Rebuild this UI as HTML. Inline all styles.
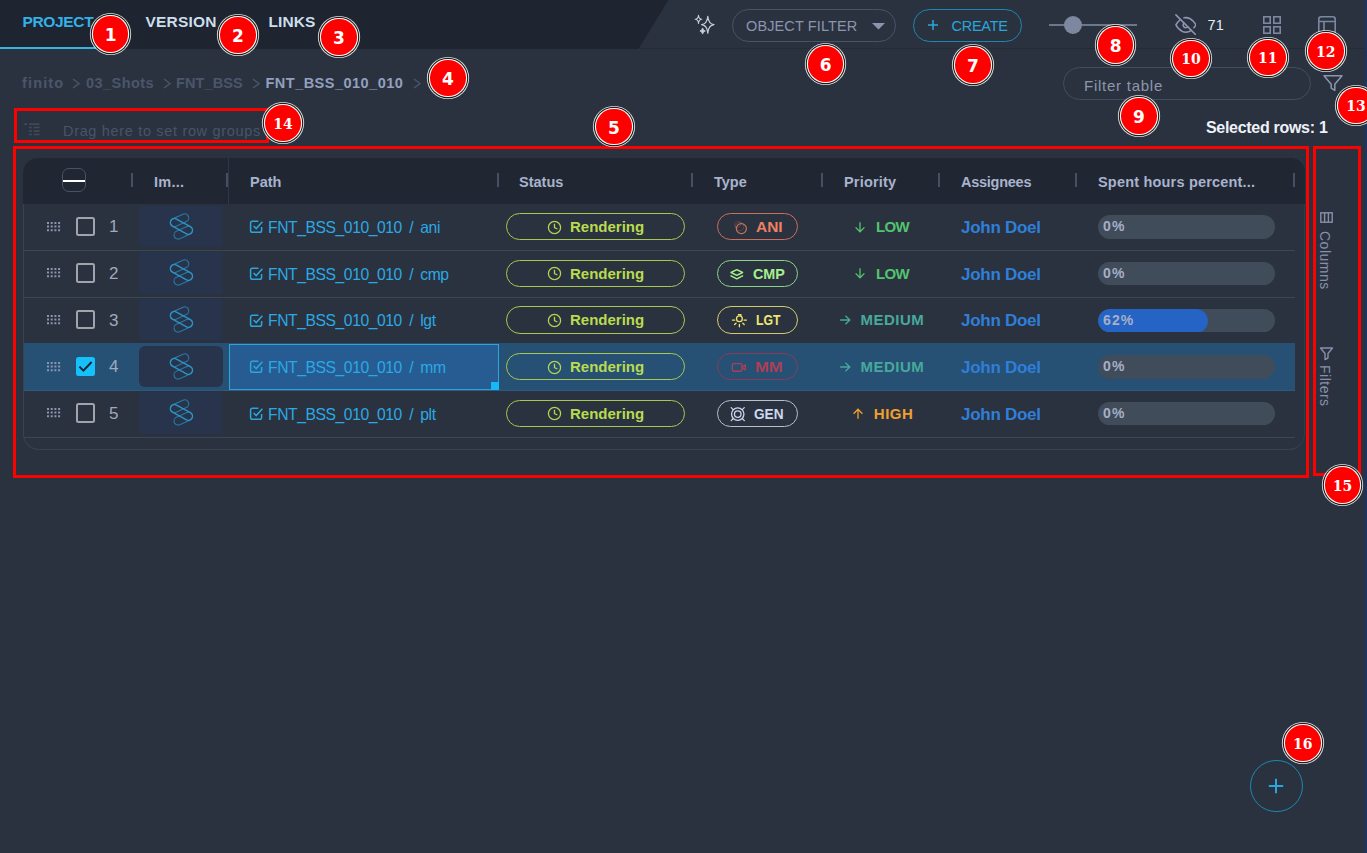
<!DOCTYPE html>
<html lang="en">
<head>
<meta charset="utf-8">
<title>Project tasks</title>
<style>
*{box-sizing:border-box;margin:0;padding:0}
html,body{width:1367px;height:853px;overflow:hidden}
body{background:#2a3240;font-family:"Liberation Sans",sans-serif;color:#d0d6e2;position:relative}
.abs{position:absolute}
#topdark{left:0;top:0;width:680px;height:49px;background:#1e2430;clip-path:polygon(0 0,668.5px 0,638.5px 49px,0 49px)}
#topline{left:640px;top:48px;width:727px;height:1px;background:#252c39}
.tab{top:12.5px;font-size:15.5px;font-weight:bold;color:#cddeec;white-space:nowrap}
#tabline{left:0;top:47px;width:113px;height:2px;background:#38b4e4}
.crumb{top:74.5px;font-size:14.5px;font-weight:bold;color:#4b566a;white-space:nowrap}
.chev{fill:none;stroke:#4b566a;stroke-width:1.4}
.pill{border-radius:17px;border:1px solid #4a5365;height:33px}
.badge{width:0;height:0;z-index:50}
.badge u{position:absolute;left:-17.8px;top:-17.8px;width:35.6px;height:35.6px;border-radius:50%;background:#f00;box-shadow:0 0 0 1.1px #fff,0 0 0 2.2px #1c1c1c,0 0 0 3.1px rgba(255,255,255,.85)}
.badge span{position:absolute;left:-20px;top:-20px;width:40px;height:40px;text-align:center;color:#fff;font:bold 17px/43px "DejaVu Sans",sans-serif}
.badge.s span{font:bold 14px/43px "DejaVu Serif",serif}
.redbox{border:3.2px solid #f00;z-index:40}

#thead{left:23.3px;top:157.7px;width:1281.5px;height:46.3px;background:#202733;border-radius:15px 14px 0 0}
#tframe{left:23.3px;top:204px;width:1281.5px;height:245.8px;border:1px solid #394253;border-top:none;border-radius:0 0 16px 16px;border-right-color:#323b4a}
.hd{top:173.5px;font-size:14.5px;font-weight:bold;color:#a9b3cd;white-space:nowrap}
.sep{top:173px;width:2px;height:14px;background:#475062}
.row{left:24px;width:1271px;height:46.67px}
.row::after{content:"";position:absolute;left:0;right:0;top:46.1px;height:1px;background:#3b4656}
.row.sel::before{content:"";position:absolute;left:0;right:0;top:-.7px;height:47.8px;background:#265074}
.row.sel::after{background:#2f5a7e}
.drag{left:22.8px;top:18px}
.cb{left:52.4px;top:13px;width:19px;height:19.2px;border:2px solid #a1a4aa;border-radius:2.5px}
.cb.on{background:#15c0fb;border:none}
.cb.on svg{position:absolute;left:0;top:0}
.num{left:85px;top:13.7px;font-size:17px;color:#a0a9be}
.thumb{left:115px;top:1.8px;width:84px;height:41.5px;background:#27344b;border-radius:3px}
.row.sel .thumb{top:2.6px;height:40.2px;border-radius:6px;background:#27344c}
.logo{left:143px;top:8px}
.tick{left:225.2px;top:15.6px}
.path{left:244px;top:14.2px;font-size:16.5px;letter-spacing:-.45px;word-spacing:3.5px;transform:scaleX(.95);transform-origin:0 0;color:#2ba9e4;white-space:nowrap}
.focus{left:204.7px;top:0;width:270.8px;height:46px;border:1px solid #2ba6dc;background:#265c92}
.handle{left:467.3px;top:38.2px;width:7.6px;height:7.6px;background:#16b8f8}
.st{left:482.1px;top:9.2px;width:179.3px;height:27.2px;border:1.4px solid #a8c84e;border-radius:14px}
.clock{left:523.2px;top:15.9px}
.stt{left:546px;top:14.2px;font-size:15px;font-weight:bold;color:#b8dc4e;white-space:nowrap}
.ty{left:693.2px;top:9.2px;width:81.1px;height:27.2px;border:1.5px solid;border-radius:14px}
.tyi{left:705px;top:14.2px}
.tyt{transform-origin:0 0;top:14.2px;font-size:15px;font-weight:bold;white-space:nowrap}
.arr.down{left:830.1px;top:17px}
.arr.up{left:827.5px;top:17.2px}
.arr.right{left:815.1px;top:17.3px}
.pri{top:14.2px;font-size:15px;font-weight:bold;white-space:nowrap}
.plow{left:852px;letter-spacing:-.7px}.pmedium{left:836.6px;letter-spacing:.45px}.phigh{left:849.8px;letter-spacing:.5px}
.who{left:937px;top:14.3px;font-size:17px;font-weight:bold;letter-spacing:-.27px;color:#2f7fd8;white-space:nowrap}
.bar{left:1074.1px;top:11.4px;width:176.5px;height:23.4px;border-radius:12px;background:#414c5a;overflow:hidden}
.bar i{position:absolute;left:0;top:0;width:110.2px;height:24px;background:#2563c4;border-radius:12px}
.bar span{position:absolute;left:5px;top:3px;font-size:14px;font-weight:bold;color:#a5afc6;letter-spacing:1.1px}
.side{font-size:14px;color:#8790a8;transform:rotate(90deg);transform-origin:0 0;white-space:nowrap;letter-spacing:.5px}
#fab{left:1250px;top:759.7px;width:52.6px;height:52.6px;border-radius:50%;border:1.8px solid #1f86b1}
</style>
</head>
<body>
<!-- top bar -->
<div class="abs" id="topdark"></div>
<div class="abs" id="topline"></div>
<div class="abs tab" style="left:22.5px;color:#33b1e8;letter-spacing:-.35px">PROJECT</div>
<div class="abs tab" style="left:145.5px;letter-spacing:.2px">VERSION</div>
<div class="abs tab" style="left:268.5px;letter-spacing:.1px">LINKS</div>
<div class="abs" id="tabline"></div>

<!-- breadcrumb -->
<div class="abs crumb" style="left:22px;letter-spacing:1.15px">finito</div>
<svg class="abs chev" style="left:72px;top:78px" width="8" height="11" viewBox="0 0 8 11"><path d="M1 1 L7 5.5 L1 10"/></svg>
<div class="abs crumb" style="left:86px;letter-spacing:.45px">03_Shots</div>
<svg class="abs chev" style="left:162.5px;top:78px" width="8" height="11" viewBox="0 0 8 11"><path d="M1 1 L7 5.5 L1 10"/></svg>
<div class="abs crumb" style="left:176px;letter-spacing:.1px">FNT_BSS</div>
<svg class="abs chev" style="left:252px;top:78px" width="8" height="11" viewBox="0 0 8 11"><path d="M1 1 L7 5.5 L1 10"/></svg>
<div class="abs crumb" style="left:265.5px;color:#93a0bd;letter-spacing:.48px">FNT_BSS_010_010</div>
<svg class="abs chev" style="left:412.5px;top:78px" width="8" height="11" viewBox="0 0 8 11"><path d="M1 1 L7 5.5 L1 10"/></svg>

<!-- toolbar -->
<svg class="abs" style="left:694px;top:14px" width="22" height="22" viewBox="0 0 22 22" fill="none" stroke="#c5cedc" stroke-width="1.2" stroke-linejoin="round"><path d="M13.8 2.299999999999999 Q14.5 10.0 20.0 10.7 Q14.5 11.399999999999999 13.8 19.1 Q13.100000000000001 11.399999999999999 7.6000000000000005 10.7 Q13.100000000000001 10.0 13.8 2.299999999999999 Z"/><path d="M4.5 1.2000000000000002 Q4.8 5.0 7.8 5.3 Q4.8 5.6 4.5 9.399999999999999 Q4.2 5.6 1.2000000000000002 5.3 Q4.2 5.0 4.5 1.2000000000000002 Z" stroke-width="1.1"/><path d="M8.6 13.9 Q9.1 16.5 11.3 17 Q9.1 17.5 8.6 20.1 Q8.1 17.5 5.8999999999999995 17 Q8.1 16.5 8.6 13.9 Z" stroke-width=".8" fill="#c5cedc"/></svg>
<div class="abs pill" style="left:732.3px;top:8.7px;width:164px;height:33.2px;border-width:1.4px"></div>
<div class="abs" style="left:746px;top:17.5px;font-size:14.5px;color:#8b95ae;white-space:nowrap;letter-spacing:.12px">OBJECT FILTER</div>
<svg class="abs" style="left:872px;top:23px" width="13" height="7" viewBox="0 0 13 7"><path d="M0 0 H13 L6.5 6.6 Z" fill="#8b95ae"/></svg>
<div class="abs pill" style="left:913px;top:9px;width:109px;border-color:#1f86b1;border-width:1.5px"></div>
<div class="abs" style="left:951.5px;top:17.5px;font-size:14.5px;color:#2ba6dc;white-space:nowrap;letter-spacing:-.25px">CREATE</div>
<svg class="abs" style="left:927px;top:19px" width="12" height="12" viewBox="0 0 12 12" stroke="#2ba6dc" stroke-width="1.5"><path d="M6 1 V11 M1 6 H11"/></svg>
<div class="abs" style="left:1049px;top:24px;width:88px;height:2px;background:#6c768d"></div>
<div class="abs" style="left:1064px;top:16px;width:18px;height:18px;border-radius:50%;background:#7d87a0"></div>
<svg class="abs" style="left:1174.7px;top:13.7px" width="21.8" height="21.8" viewBox="0 0 24 24" fill="none" stroke="#8d97b1" stroke-width="1.7" stroke-linecap="round" stroke-linejoin="round"><path d="M17.94 17.94A10.07 10.07 0 0 1 12 20c-7 0-11-8-11-8a18.45 18.45 0 0 1 5.06-5.94M9.9 4.24A9.12 9.12 0 0 1 12 4c7 0 11 8 11 8a18.5 18.5 0 0 1-2.16 3.19m-6.72-1.07a3 3 0 1 1-4.24-4.24"/><path d="M1 1 L23 23"/></svg>
<div class="abs" style="left:1207.5px;top:16.5px;font-size:14.5px;color:#e6ecf4;letter-spacing:.2px">71</div>
<svg class="abs" style="left:1262px;top:15px" width="20" height="20" viewBox="0 0 20 20" fill="none" stroke="#7d87a0" stroke-width="1.6">
<rect x="1.8" y="1.8" width="6.4" height="6.4"/><rect x="11.8" y="1.8" width="6.4" height="6.4"/><rect x="1.8" y="11.8" width="6.4" height="6.4"/><rect x="11.8" y="11.8" width="6.4" height="6.4"/>
</svg>
<svg class="abs" style="left:1317px;top:15px" width="20" height="20" viewBox="0 0 20 20" fill="none" stroke="#7d87a0" stroke-width="1.6">
<rect x="1.8" y="1.8" width="16.4" height="16.4" rx="2.5"/><path d="M1.8 6.5 H18.2 M7 6.5 V18.2"/>
</svg>
<!-- filter input -->
<div class="abs pill" style="left:1063px;top:67px;width:248px;height:33px;border-color:#434d5f;border-width:1.2px"></div>
<div class="abs" style="left:1084px;top:77px;font-size:15px;color:#8e97aa;white-space:nowrap;letter-spacing:.75px">Filter table</div>
<svg class="abs" style="left:1322px;top:73px" width="22" height="22" viewBox="0 0 22 22" fill="none" stroke="#8b95ae" stroke-width="1.5" stroke-linejoin="round"><path d="M2 2.8 H20 L12.8 11.2 V17.4 L9.2 15.2 V11.2 Z"/></svg>
<div class="abs" style="left:1206px;top:118.5px;font-size:16px;font-weight:bold;color:#eef2f8;white-space:nowrap;letter-spacing:-.3px">Selected rows: 1</div>
<!-- row group bar -->
<svg class="abs" style="left:24px;top:122px" width="18" height="15" viewBox="0 0 18 15" fill="#3f4b5e"><rect x=".1" y="1.3" width="3" height="1.6"/><rect x="5" y="1.3" width="10.6" height="1.6"/><rect x="5" y="4.7" width="2.8" height="1.6"/><rect x="9.8" y="4.7" width="5.8" height="1.6"/><rect x="5" y="8.2" width="2.8" height="1.6"/><rect x="9.8" y="8.2" width="5.8" height="1.6"/><rect x="5" y="11.7" width="2.8" height="1.5"/><rect x="9.8" y="11.7" width="5.8" height="1.5"/></svg>
<div class="abs" style="left:63px;top:123px;font-size:14.5px;color:#485469;white-space:nowrap;letter-spacing:.67px">Drag here to set row groups</div>


<!-- table -->
<div class="abs" id="thead"></div>
<div class="abs" id="tframe"></div>
<div class="abs" style="left:62.3px;top:168px;width:23.7px;height:24px;border:1px solid #4a5365;border-radius:7px"></div>
<div class="abs" style="left:63px;top:179.7px;width:22px;height:2px;background:#fff"></div>
<div class="abs sep" style="left:131px"></div>
<div class="abs hd" style="left:154px;letter-spacing:.25px">Im...</div>
<div class="abs sep" style="left:226px"></div>
<div class="abs" style="left:228px;top:158px;width:1px;height:46px;background:#2f3746"></div>
<div class="abs hd" style="left:250px">Path</div>
<div class="abs sep" style="left:497px"></div>
<div class="abs hd" style="left:519px">Status</div>
<div class="abs sep" style="left:691px"></div>
<div class="abs hd" style="left:714px">Type</div>
<div class="abs sep" style="left:821px"></div>
<div class="abs hd" style="left:844px;letter-spacing:.18px">Priority</div>
<div class="abs sep" style="left:938px"></div>
<div class="abs hd" style="left:961px;letter-spacing:-.26px">Assignees</div>
<div class="abs sep" style="left:1075px"></div>
<div class="abs hd" style="left:1098px;letter-spacing:.19px">Spent hours percent...</div>
<div class="abs sep" style="left:1293px"></div>
<!-- rows -->
<div class="abs row" style="top:203.80px">
<svg class="abs drag" width="14" height="10" viewBox="0 0 14 10" fill="#8a94ad"><path d="M0 0h2v2H0zM3.7 0h2v2h-2zM7.4 0h2v2h-2zM11.1 0h2v2h-2zM0 3.6h2v2H0zM3.7 3.6h2v2h-2zM7.4 3.6h2v2h-2zM11.1 3.6h2v2h-2zM0 7.2h2v2H0zM3.7 7.2h2v2h-2zM7.4 7.2h2v2h-2zM11.1 7.2h2v2h-2z"/></svg>
<div class="abs cb"></div>
<div class="abs num">1</div>
<div class="abs thumb"></div><svg class="abs logo" width="28" height="30" viewBox="0 0 28 30" fill="none"><g transform="translate(14.45 14.4) scale(.94) translate(-14.45 -14.6)"><g stroke="#2a789f" stroke-width="1.25"><rect x="-10.30" y="-4.30" width="20.59" height="8.60" rx="4.30" transform="translate(12.45 8.00) rotate(-24.6)"/><rect x="-10.37" y="-4.30" width="20.75" height="8.60" rx="4.30" transform="translate(16.38 21.23) rotate(-24.6)"/></g><rect x="-12.80" y="-4.30" width="25.61" height="8.60" rx="4.30" transform="translate(14.45 14.60) rotate(28.8)" stroke="#2c93c5" stroke-width="1.5"/></g></svg>
<svg class="abs tick" width="15" height="15" viewBox="0 0 15 15" fill="none" stroke="#2ba6dc" stroke-width="1.5"><path d="M12.6 8 V11.4 a1.8 1.8 0 0 1 -1.8 1.8 H3.4 A1.8 1.8 0 0 1 1.6 11.4 V4 A1.8 1.8 0 0 1 3.4 2.2 H9.4"/><path d="M4.6 7 L7.2 9.6 L13.4 2.8"/></svg>
<div class="abs path">FNT_BSS_010_010 / ani</div>
<div class="abs st"></div><svg class="abs clock" width="15" height="15" viewBox="0 0 15 15" fill="none" stroke="#b2d54e" stroke-width="1.3"><circle cx="7.5" cy="7.5" r="6.1"/><path d="M7.5 3.8 V7.7 L10.4 9"/></svg><div class="abs stt">Rendering</div>
<div class="abs ty" style="border-color:#cc6f59"></div><svg class="abs tyi" width="20" height="20" viewBox="0 0 20 20" fill="none" stroke="#f08062"><circle cx="12.4" cy="10.6" r="5" stroke-width="1.2" opacity=".8"/><circle cx="10.6" cy="8.6" r="4.2" stroke-width=".8" opacity=".3"/><circle cx="8.6" cy="6.4" r="3.2" stroke-width=".8" opacity=".2"/></svg><div class="abs tyt" style="color:#f08062;left:732px;transform:scaleX(1.03)">ANI</div>
<svg class="abs arr down" width="12" height="12" viewBox="0 0 12 12" fill="none" stroke="#52c46c" stroke-width="1.3"><path d="M6 1.2 V10.6 M1.6 6.4 L6 10.8 L10.4 6.4"/></svg><div class="abs pri plow" style="color:#52c46c">LOW</div>
<div class="abs who">John Doel</div>
<div class="abs bar"><span>0%</span></div>
</div>
<div class="abs row" style="top:250.47px">
<svg class="abs drag" width="14" height="10" viewBox="0 0 14 10" fill="#8a94ad"><path d="M0 0h2v2H0zM3.7 0h2v2h-2zM7.4 0h2v2h-2zM11.1 0h2v2h-2zM0 3.6h2v2H0zM3.7 3.6h2v2h-2zM7.4 3.6h2v2h-2zM11.1 3.6h2v2h-2zM0 7.2h2v2H0zM3.7 7.2h2v2h-2zM7.4 7.2h2v2h-2zM11.1 7.2h2v2h-2z"/></svg>
<div class="abs cb"></div>
<div class="abs num">2</div>
<div class="abs thumb"></div><svg class="abs logo" width="28" height="30" viewBox="0 0 28 30" fill="none"><g transform="translate(14.45 14.4) scale(.94) translate(-14.45 -14.6)"><g stroke="#2a789f" stroke-width="1.25"><rect x="-10.30" y="-4.30" width="20.59" height="8.60" rx="4.30" transform="translate(12.45 8.00) rotate(-24.6)"/><rect x="-10.37" y="-4.30" width="20.75" height="8.60" rx="4.30" transform="translate(16.38 21.23) rotate(-24.6)"/></g><rect x="-12.80" y="-4.30" width="25.61" height="8.60" rx="4.30" transform="translate(14.45 14.60) rotate(28.8)" stroke="#2c93c5" stroke-width="1.5"/></g></svg>
<svg class="abs tick" width="15" height="15" viewBox="0 0 15 15" fill="none" stroke="#2ba6dc" stroke-width="1.5"><path d="M12.6 8 V11.4 a1.8 1.8 0 0 1 -1.8 1.8 H3.4 A1.8 1.8 0 0 1 1.6 11.4 V4 A1.8 1.8 0 0 1 3.4 2.2 H9.4"/><path d="M4.6 7 L7.2 9.6 L13.4 2.8"/></svg>
<div class="abs path">FNT_BSS_010_010 / cmp</div>
<div class="abs st"></div><svg class="abs clock" width="15" height="15" viewBox="0 0 15 15" fill="none" stroke="#b2d54e" stroke-width="1.3"><circle cx="7.5" cy="7.5" r="6.1"/><path d="M7.5 3.8 V7.7 L10.4 9"/></svg><div class="abs stt">Rendering</div>
<div class="abs ty" style="border-color:#8bd486"></div><svg class="abs tyi" width="20" height="20" viewBox="0 0 20 20" fill="none" stroke="#a5f08c"><path d="M7.8 4.6 L13.6 7.5 L7.8 10.4 L2 7.5 Z" stroke-width="1.4" stroke-linejoin="round"/><path d="M2 10.8 L7.8 13.8 L13.6 10.8" stroke-width="1.4" stroke-linejoin="round" stroke-linecap="round"/></svg><div class="abs tyt" style="color:#a5f08c;left:728.5px;transform:scaleX(0.955)">CMP</div>
<svg class="abs arr down" width="12" height="12" viewBox="0 0 12 12" fill="none" stroke="#52c46c" stroke-width="1.3"><path d="M6 1.2 V10.6 M1.6 6.4 L6 10.8 L10.4 6.4"/></svg><div class="abs pri plow" style="color:#52c46c">LOW</div>
<div class="abs who">John Doel</div>
<div class="abs bar"><span>0%</span></div>
</div>
<div class="abs row" style="top:297.14px">
<svg class="abs drag" width="14" height="10" viewBox="0 0 14 10" fill="#8a94ad"><path d="M0 0h2v2H0zM3.7 0h2v2h-2zM7.4 0h2v2h-2zM11.1 0h2v2h-2zM0 3.6h2v2H0zM3.7 3.6h2v2h-2zM7.4 3.6h2v2h-2zM11.1 3.6h2v2h-2zM0 7.2h2v2H0zM3.7 7.2h2v2h-2zM7.4 7.2h2v2h-2zM11.1 7.2h2v2h-2z"/></svg>
<div class="abs cb"></div>
<div class="abs num">3</div>
<div class="abs thumb"></div><svg class="abs logo" width="28" height="30" viewBox="0 0 28 30" fill="none"><g transform="translate(14.45 14.4) scale(.94) translate(-14.45 -14.6)"><g stroke="#2a789f" stroke-width="1.25"><rect x="-10.30" y="-4.30" width="20.59" height="8.60" rx="4.30" transform="translate(12.45 8.00) rotate(-24.6)"/><rect x="-10.37" y="-4.30" width="20.75" height="8.60" rx="4.30" transform="translate(16.38 21.23) rotate(-24.6)"/></g><rect x="-12.80" y="-4.30" width="25.61" height="8.60" rx="4.30" transform="translate(14.45 14.60) rotate(28.8)" stroke="#2c93c5" stroke-width="1.5"/></g></svg>
<svg class="abs tick" width="15" height="15" viewBox="0 0 15 15" fill="none" stroke="#2ba6dc" stroke-width="1.5"><path d="M12.6 8 V11.4 a1.8 1.8 0 0 1 -1.8 1.8 H3.4 A1.8 1.8 0 0 1 1.6 11.4 V4 A1.8 1.8 0 0 1 3.4 2.2 H9.4"/><path d="M4.6 7 L7.2 9.6 L13.4 2.8"/></svg>
<div class="abs path">FNT_BSS_010_010 / lgt</div>
<div class="abs st"></div><svg class="abs clock" width="15" height="15" viewBox="0 0 15 15" fill="none" stroke="#b2d54e" stroke-width="1.3"><circle cx="7.5" cy="7.5" r="6.1"/><path d="M7.5 3.8 V7.7 L10.4 9"/></svg><div class="abs stt">Rendering</div>
<div class="abs ty" style="border-color:#d6ca68"></div><svg class="abs tyi" width="20" height="20" viewBox="0 0 20 20" fill="none" stroke="#f0e66e"><circle cx="10.4" cy="7.8" r="2.9" stroke-width="1.3"/><path d="M8.9 3.6 H11.9 V5" stroke-width="1.2"/><path d="M3.4 9.1 H5.8 M15 9.1 H17.4 M5.6 13.6 L7 12.3 M15.2 13.6 L13.8 12.3 M10.4 13.3 V15.8" stroke-width="1.3" stroke-linecap="round"/></svg><div class="abs tyt" style="color:#f0e66e;left:731.8px;transform:scaleX(0.82)">LGT</div>
<svg class="abs arr right" width="12" height="12" viewBox="0 0 12 12" fill="none" stroke="#48a89c" stroke-width="1.3"><path d="M1.2 6 H10.6 M6.4 1.8 L10.8 6 L6.4 10.2"/></svg><div class="abs pri pmedium" style="color:#48a89c">MEDIUM</div>
<div class="abs who">John Doel</div>
<div class="abs bar"><i></i><span>62%</span></div>
</div>
<div class="abs row sel" style="top:343.81px">
<svg class="abs drag" width="14" height="10" viewBox="0 0 14 10" fill="#8a94ad"><path d="M0 0h2v2H0zM3.7 0h2v2h-2zM7.4 0h2v2h-2zM11.1 0h2v2h-2zM0 3.6h2v2H0zM3.7 3.6h2v2h-2zM7.4 3.6h2v2h-2zM11.1 3.6h2v2h-2zM0 7.2h2v2H0zM3.7 7.2h2v2h-2zM7.4 7.2h2v2h-2zM11.1 7.2h2v2h-2z"/></svg>
<div class="abs cb on"><svg width="19" height="19" viewBox="0 0 19 19" fill="none" stroke="#1b2431" stroke-width="2"><path d="M3.4 9.6 L7.4 13.6 L15.6 5"/></svg></div>
<div class="abs num">4</div>
<div class="abs thumb"></div><svg class="abs logo" width="28" height="30" viewBox="0 0 28 30" fill="none"><g transform="translate(14.45 14.4) scale(.94) translate(-14.45 -14.6)"><g stroke="#2a789f" stroke-width="1.25"><rect x="-10.30" y="-4.30" width="20.59" height="8.60" rx="4.30" transform="translate(12.45 8.00) rotate(-24.6)"/><rect x="-10.37" y="-4.30" width="20.75" height="8.60" rx="4.30" transform="translate(16.38 21.23) rotate(-24.6)"/></g><rect x="-12.80" y="-4.30" width="25.61" height="8.60" rx="4.30" transform="translate(14.45 14.60) rotate(28.8)" stroke="#2c93c5" stroke-width="1.5"/></g></svg>
<div class="abs focus"></div><div class="abs handle"></div>
<svg class="abs tick" width="15" height="15" viewBox="0 0 15 15" fill="none" stroke="#2ba6dc" stroke-width="1.5"><path d="M12.6 8 V11.4 a1.8 1.8 0 0 1 -1.8 1.8 H3.4 A1.8 1.8 0 0 1 1.6 11.4 V4 A1.8 1.8 0 0 1 3.4 2.2 H9.4"/><path d="M4.6 7 L7.2 9.6 L13.4 2.8"/></svg>
<div class="abs path">FNT_BSS_010_010 / mm</div>
<div class="abs st"></div><svg class="abs clock" width="15" height="15" viewBox="0 0 15 15" fill="none" stroke="#b2d54e" stroke-width="1.3"><circle cx="7.5" cy="7.5" r="6.1"/><path d="M7.5 3.8 V7.7 L10.4 9"/></svg><div class="abs stt">Rendering</div>
<div class="abs ty" style="border-color:#8a3c55"></div><svg class="abs tyi" width="20" height="20" viewBox="0 0 20 20" fill="none" stroke="#ab3f57"><rect x="3.3" y="5.6" width="9.6" height="7.6" rx="1.5" stroke-width="1.4"/><path d="M13 9.4 L16.4 6.8 V12 Z" stroke-width="1.2" stroke-linejoin="round"/></svg><div class="abs tyt" style="color:#ab3f57;left:731.4px;transform:scaleX(1.11)">MM</div>
<svg class="abs arr right" width="12" height="12" viewBox="0 0 12 12" fill="none" stroke="#48a89c" stroke-width="1.3"><path d="M1.2 6 H10.6 M6.4 1.8 L10.8 6 L6.4 10.2"/></svg><div class="abs pri pmedium" style="color:#48a89c">MEDIUM</div>
<div class="abs who">John Doel</div>
<div class="abs bar"><span>0%</span></div>
</div>
<div class="abs row" style="top:390.48px">
<svg class="abs drag" width="14" height="10" viewBox="0 0 14 10" fill="#8a94ad"><path d="M0 0h2v2H0zM3.7 0h2v2h-2zM7.4 0h2v2h-2zM11.1 0h2v2h-2zM0 3.6h2v2H0zM3.7 3.6h2v2h-2zM7.4 3.6h2v2h-2zM11.1 3.6h2v2h-2zM0 7.2h2v2H0zM3.7 7.2h2v2h-2zM7.4 7.2h2v2h-2zM11.1 7.2h2v2h-2z"/></svg>
<div class="abs cb"></div>
<div class="abs num">5</div>
<div class="abs thumb"></div><svg class="abs logo" width="28" height="30" viewBox="0 0 28 30" fill="none"><g transform="translate(14.45 14.4) scale(.94) translate(-14.45 -14.6)"><g stroke="#2a789f" stroke-width="1.25"><rect x="-10.30" y="-4.30" width="20.59" height="8.60" rx="4.30" transform="translate(12.45 8.00) rotate(-24.6)"/><rect x="-10.37" y="-4.30" width="20.75" height="8.60" rx="4.30" transform="translate(16.38 21.23) rotate(-24.6)"/></g><rect x="-12.80" y="-4.30" width="25.61" height="8.60" rx="4.30" transform="translate(14.45 14.60) rotate(28.8)" stroke="#2c93c5" stroke-width="1.5"/></g></svg>
<svg class="abs tick" width="15" height="15" viewBox="0 0 15 15" fill="none" stroke="#2ba6dc" stroke-width="1.5"><path d="M12.6 8 V11.4 a1.8 1.8 0 0 1 -1.8 1.8 H3.4 A1.8 1.8 0 0 1 1.6 11.4 V4 A1.8 1.8 0 0 1 3.4 2.2 H9.4"/><path d="M4.6 7 L7.2 9.6 L13.4 2.8"/></svg>
<div class="abs path">FNT_BSS_010_010 / plt</div>
<div class="abs st"></div><svg class="abs clock" width="15" height="15" viewBox="0 0 15 15" fill="none" stroke="#b2d54e" stroke-width="1.3"><circle cx="7.5" cy="7.5" r="6.1"/><path d="M7.5 3.8 V7.7 L10.4 9"/></svg><div class="abs stt">Rendering</div>
<div class="abs ty" style="border-color:#b6becd"></div><svg class="abs tyi" width="20" height="20" viewBox="0 0 20 20" fill="none" stroke="#cbd8ee"><circle cx="8.75" cy="9.1" r="6.2" stroke-width="1.3"/><circle cx="8.75" cy="9.1" r="3.3" stroke-width="1.3"/><path d="M2.2 2.6 L4 4.4 M15.3 2.6 L13.5 4.4 M2.2 15.6 L4 13.8 M15.3 15.6 L13.5 13.8" stroke-width="1.3" stroke-linecap="round"/></svg><div class="abs tyt" style="color:#cbd8ee;left:729.7px;transform:scaleX(0.91)">GEN</div>
<svg class="abs arr up" width="12" height="12" viewBox="0 0 12 12" fill="none" stroke="#f0a030" stroke-width="1.3"><path d="M6 10.8 V1.4 M1.6 5.8 L6 1.2 L10.4 5.8"/></svg><div class="abs pri phigh" style="color:#f0a030">HIGH</div>
<div class="abs who">John Doel</div>
<div class="abs bar"><span>0%</span></div>
</div>
<!-- /rows -->
<!-- sidebar -->
<svg class="abs" style="left:1320px;top:212px" width="13" height="11" viewBox="0 0 13 11" fill="none" stroke="#8790a8" stroke-width="1.4"><rect x=".8" y=".8" width="11.4" height="9.4"/><path d="M4.6 .8 V10.2 M8.4 .8 V10.2"/></svg>
<div class="abs side" style="left:1333px;top:231px">Columns</div>
<svg class="abs" style="left:1319px;top:346px" width="15" height="15" viewBox="0 0 15 15" fill="none" stroke="#8790a8" stroke-width="1.4" stroke-linejoin="round"><path d="M1.5 2 H13.5 L9 7.5 V12 L6 13.5 V7.5 Z"/></svg>
<div class="abs side" style="left:1333px;top:365px">Filters</div>
<div class="abs" style="left:1365px;top:0;width:2px;height:853px;background:#1d3361"></div>
<!-- fab -->
<div class="abs" id="fab"></div>
<svg class="abs" style="left:1267.3px;top:777px" width="18" height="18" viewBox="0 0 18 18" stroke="#2ba6dc" stroke-width="2"><path d="M9 1.8 V16.2 M1.8 9 H16.2"/></svg>

<!-- badges -->
<div class="abs badge" style="left:110.7px;top:34.1px"><u></u><span>1</span></div>
<div class="abs badge" style="left:237.8px;top:35px"><u></u><span>2</span></div>
<div class="abs badge" style="left:339px;top:36.9px"><u></u><span>3</span></div>
<div class="abs badge" style="left:448px;top:78px"><u></u><span>4</span></div>
<div class="abs badge" style="left:614px;top:126.5px"><u></u><span>5</span></div>
<div class="abs badge" style="left:825.6px;top:64px"><u></u><span>6</span></div>
<div class="abs badge" style="left:972.9px;top:64.8px"><u></u><span>7</span></div>
<div class="abs badge" style="left:1115.6px;top:45.1px"><u></u><span>8</span></div>
<div class="abs badge" style="left:1139px;top:116px"><u></u><span>9</span></div>
<div class="abs badge s" style="left:1191px;top:58.3px"><u></u><span>10</span></div>
<div class="abs badge s" style="left:1267.8px;top:57.3px"><u></u><span>11</span></div>
<div class="abs badge s" style="left:1325.8px;top:51.1px"><u></u><span>12</span></div>
<div class="abs badge s" style="left:1356px;top:105.3px"><u></u><span>13</span></div>
<div class="abs badge s" style="left:283px;top:123.2px"><u></u><span>14</span></div>
<div class="abs badge s" style="left:1342.5px;top:485px"><u></u><span>15</span></div>
<div class="abs badge s" style="left:1302.8px;top:743px"><u></u><span>16</span></div>

<!-- red boxes -->
<div class="abs redbox" style="left:13.7px;top:108.3px;width:255.4px;height:35px"></div>
<div class="abs redbox" style="left:12.5px;top:146.4px;width:1296.2px;height:331.4px"></div>
<div class="abs redbox" style="left:1312.5px;top:146.4px;width:48.2px;height:329.3px"></div>

</body>
</html>
